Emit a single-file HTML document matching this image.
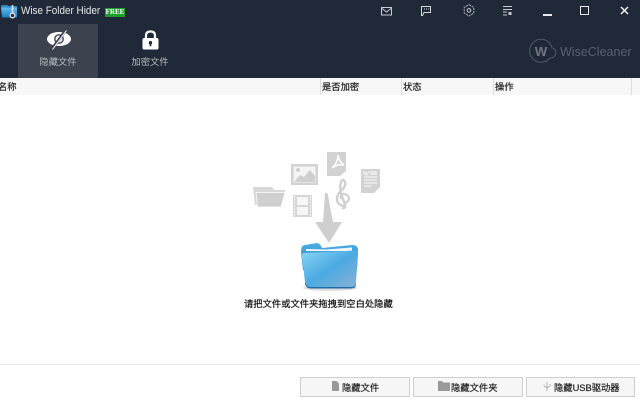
<!DOCTYPE html>
<html><head><meta charset="utf-8">
<style>
html,body{margin:0;padding:0;width:640px;height:410px;overflow:hidden;background:#fff}
body{position:relative;font-family:"Liberation Sans","Noto Sans CJK SC",sans-serif;font-size:9.3px;color:#222}
.a{position:absolute;white-space:nowrap}
.t{-webkit-text-stroke:.2px currentColor}
.hc{top:79px;height:16px;line-height:16px;font-size:9.3px;color:#222}
.sep{position:absolute;top:78px;width:1px;height:17px;background:#ddd}
.btn{position:absolute;top:377px;height:18px;background:#f6f6f6;border:1px solid #cfcfcf;line-height:18px;box-sizing:content-box}
svg{position:absolute;overflow:visible}
</style></head><body>
<div class="a" style="left:0;top:0;width:640px;height:78px;background:#1f2937"></div>
<div class="a" style="left:18px;top:24px;width:80px;height:54px;background:#3c434f"></div>

<svg style="left:0;top:0" width="30" height="24" viewBox="0 0 30 24">
<defs><linearGradient id="b" x1="0" y1="0" x2="0" y2="1"><stop offset="0" stop-color="#63bdf0"/><stop offset="1" stop-color="#1f7cc4"/></linearGradient></defs>
<path d="M1 7 Q1 5 3 5 H7 L9 6 H17 V17 H2 Z" fill="#2d8ac8"/>
<path d="M1 7.500 H17 V17.500 H2.500 Z" fill="url(#b)"/>
<path d="M12.500 5 V14" stroke="#d5dde3" stroke-width="1.800"/>
<circle cx="12.500" cy="15.500" r="2.300" fill="#1f2937" stroke="#e0e6ea" stroke-width="1.300"/>
</svg>
<div class="a" style="left:21px;top:4px;font-size:11px;line-height:14px;color:#e8eaed;transform:scaleX(.9);transform-origin:0 0">Wise Folder Hider</div>
<div class="a" style="left:105px;top:8px;width:20px;height:9px;background:#1f9e2c;color:#fff;font:bold 7px/9px 'Liberation Serif',serif;text-align:center">FREE</div>

<svg style="left:381px;top:7px" width="11" height="9" viewBox="0 0 11 9"><rect x=".5" y=".5" width="10" height="7.500" fill="none" stroke="#c9ccd1"/><path d="M1 1.500 L5.500 5 L10 1.500" fill="none" stroke="#c9ccd1"/></svg>
<svg style="left:421px;top:6px" width="10" height="11" viewBox="0 0 10 11"><path d="M.5 .5 H9.500 V6.500 H3 L1.500 9.500 H.5 Z" fill="none" stroke="#d5d8dc"/><path d="M3 3 H4 M5 3 H6 M7 3 H8" stroke="#d5d8dc"/></svg>
<svg style="left:463px;top:4px" width="12" height="13" viewBox="0 0 12 13"><path d="M6 .7 L10.800 3.400 V9 L6 12 L1.200 9 V3.400 Z" fill="none" stroke="#a9aeb6" stroke-dasharray="2.200 .8"/><circle cx="6" cy="6.400" r="1.800" fill="none" stroke="#c9ccd1"/></svg>
<svg style="left:503px;top:6px" width="9" height="10" viewBox="0 0 9 10"><path d="M0 .5 H9 M0 3.500 H9 M0 6 H4 M0 9 H4" stroke="#c9ccd1"/><rect x="5.500" y="6" width="3" height="3" fill="#c9ccd1"/></svg>
<div class="a" style="left:543px;top:14px;width:9px;height:1.500px;background:#e8eaed"></div>
<div class="a" style="left:580px;top:6px;width:7px;height:7px;border:1.500px solid #e8eaed"></div>
<svg style="left:620px;top:6px" width="9" height="9" viewBox="0 0 9 9"><path d="M1 1 L8 8 M8 1 L1 8" stroke="#f0f1f3" stroke-width="1.500"/></svg>

<svg style="left:40px;top:26px" width="40" height="26" viewBox="0 0 40 26"><ellipse cx="19" cy="13" rx="12" ry="7" fill="#fff"/><circle cx="19" cy="13" r="4.200" fill="none" stroke="#3c434f" stroke-width="1.400"/><path d="M26 4 L12 23" stroke="#3c434f" stroke-width="3"/><path d="M26.500 4.500 L12.500 23.500" stroke="#fff" stroke-width="1"/></svg>
<svg style="left:142px;top:30px" width="17" height="20" viewBox="0 0 17 20"><path d="M4 9 V5.500 Q4 1.500 8.500 1.500 Q13 1.500 13 5.500 V9" fill="none" stroke="#fff" stroke-width="2.200"/><rect x="0.5" y="8" width="16" height="11.500" rx="1.800" fill="#fff"/><circle cx="8.500" cy="12.700" r="1.700" fill="#1f2937"/><rect x="7.700" y="13" width="1.600" height="3.300" fill="#1f2937"/></svg>

<div class="a" style="left:18px;top:55px;width:80px;text-align:center;font-size:9.300px;line-height:14px;color:#b9bcc2">隐藏文件</div>
<div class="a" style="left:110px;top:55px;width:80px;text-align:center;font-size:9.300px;line-height:14px;color:#b9bcc2">加密文件</div>

<svg style="left:529px;top:38px" width="30" height="25" viewBox="0 0 30 25"><path d="M21 20 A11.500 11.500 0 1 1 19 3.500 Q22 6 23 10 Q25 10 26.500 12.500 Q28 17 24.500 19 Q23 20 21 20" fill="none" stroke="#515966" stroke-width="1"/></svg>
<div class="a" style="left:531px;top:44px;width:20px;text-align:center;font:bold 13px/15px 'Liberation Sans',sans-serif;color:#6f7681">W</div>
<div class="a" style="left:560px;top:44px;font-size:12.500px;line-height:16px;color:#596170">WiseCleaner</div>

<div class="a" style="left:0;top:78px;width:640px;height:17px;background:#f7f7f7"></div>
<div class="sep" style="left:320px"></div><div class="sep" style="left:401px"></div><div class="sep" style="left:493px"></div><div class="sep" style="left:631px"></div>
<div class="a hc t" style="left:-2px">名称</div>
<div class="a hc t" style="left:322px">是否加密</div>
<div class="a hc t" style="left:403px">状态</div>
<div class="a hc t" style="left:495px">操作</div>

<svg style="left:250px;top:150px" width="135" height="95" viewBox="250 150 135 95" fill="#d2d2d2">
<path d="M253 187 L255 205 H281 L285 195 V190 H275 L272 187 Z" fill="#d8d8d8"/>
<path d="M256 192.500 H285 L281 207 H257.500 Z" fill="#cfcfcf" stroke="#fff" stroke-width=".7"/>
<rect x="291" y="164" width="27" height="21" fill="#d2d2d2"/>
<rect x="293.500" y="166.500" width="22" height="16" fill="#f4f4f4"/>
<path d="M294 182 L300 175 L304 177 L310 170 L315 176 V182 Z" fill="#cfcfcf"/><circle cx="298" cy="170" r="2" fill="#cfcfcf"/>
<path d="M327 152 H346 V171 L340 176 H327 Z"/>
<path d="M332 168 Q338 163 338 155 Q339 162 344 165 Q337 164 332 168 Z" fill="none" stroke="#fff" stroke-width="1.500"/>
<path d="M361 169 H380 V187 L374 193 H361 Z"/>
<path d="M363 171 L365 175 L366 172 L367 175 L369 171" fill="none" stroke="#f4f4f4" stroke-width=".9"/>
<path d="M370 172 H377 M370 174 H377 M364 177 H377 M364 180 H377 M364 183 H377 M364 186 H372" stroke="#f4f4f4" stroke-width="1.200"/>
<path d="M344 206 Q337 205 337 199 Q337 194 342 190 Q346 186 345 182 Q343 178 341 182 Q339 187 342 197 L345 204 Q346 209 342 208" fill="none" stroke="#d0d0d0" stroke-width="2.400"/>
<path d="M344 203 Q349 202 349 198 Q348 194 343 194 Q340 195 341 199" fill="none" stroke="#d0d0d0" stroke-width="2.200"/>
<rect x="293" y="195" width="19" height="22" fill="#d6d6d6"/>
<rect x="297" y="197" width="11" height="8" fill="#f6f6f6"/><rect x="297" y="207" width="11" height="8" fill="#f6f6f6"/>
<path d="M294.500 196 V216 M310.500 196 V216" stroke="#fff" stroke-width="1" stroke-dasharray="1.500 1.500"/>
<path d="M325 193 H327.500 L333 222 H342 L329 243 L315 222 H323 Z" fill="#cfcfcf"/>
</svg>

<svg style="left:298px;top:240px" width="64" height="54" viewBox="0 0 64 54">
<defs>
<linearGradient id="f" x1="0" y1="0" x2="1" y2="1"><stop offset="0" stop-color="#8ad6f4"/><stop offset=".5" stop-color="#4aaae2"/><stop offset="1" stop-color="#8ab0d2"/></linearGradient>
<linearGradient id="k" x1="0" y1="0" x2="0" y2="1"><stop offset="0" stop-color="#4ab0e4"/><stop offset="1" stop-color="#2a80bf"/></linearGradient>
</defs>
<ellipse cx="32" cy="48" rx="27" ry="3" fill="#ddd"/>
<path d="M3 12 Q3 5 7 5 L19 3 Q22 3 24 8 L54 5 Q60 5 60 10 L59 30 H5 Z" fill="url(#k)"/>
<path d="M8 9 L28 9.500 L54 7.500 V11 H8 Z" fill="#f2f6f8"/>
<path d="M6 13 Q28 12 56 10.500 Q60 10.500 60 14 L58 42 Q58 47 53 47 H13 Q8 47 7 42 L4 17 Q4 13 6 13 Z" fill="url(#f)"/>
<path d="M7 42 Q8 47 13 47 H53 Q58 47 58 42 L58 44 Q58 48.500 53 48.500 H13 Q8 48.500 7 44 Z" fill="#1b6ca8"/>
</svg>

<div class="a t" style="left:244px;top:297px;font-size:9.300px;line-height:14px;color:#111">请把文件或文件夹拖拽到空白处隐藏</div>

<div class="a" style="left:0;top:364px;width:640px;height:1px;background:#e8e8e8"></div>

<div class="btn" style="left:300px;width:108px"></div>
<div class="btn" style="left:413px;width:108px"></div>
<div class="btn" style="left:526px;width:107px"></div>
<svg style="left:332px;top:381px" width="7" height="10" viewBox="0 0 7 10"><path d="M0 0 H4.500 L7 2.500 V10 H0 Z" fill="#999"/></svg>
<svg style="left:438px;top:381px" width="12" height="10" viewBox="0 0 12 10"><path d="M0 1 Q0 0 1 0 H4 L5 1.500 H12 V10 H0 Z" fill="#999"/></svg>
<svg style="left:543px;top:381px" width="8" height="11" viewBox="0 0 8 11"><path d="M4 1 V10 M1 3.500 V5 L4 7 M7 3 V5 L4 7" fill="none" stroke="#aaa" stroke-width=".8"/></svg>
<div class="a t" style="left:342px;top:380px;line-height:16px;font-size:9.300px;color:#222">隐藏文件</div>
<div class="a t" style="left:451px;top:380px;line-height:16px;font-size:9.300px;color:#222">隐藏文件夹</div>
<div class="a t" style="left:554px;top:380px;line-height:16px;font-size:9.300px;color:#222">隐藏USB驱动器</div>
</body></html>
